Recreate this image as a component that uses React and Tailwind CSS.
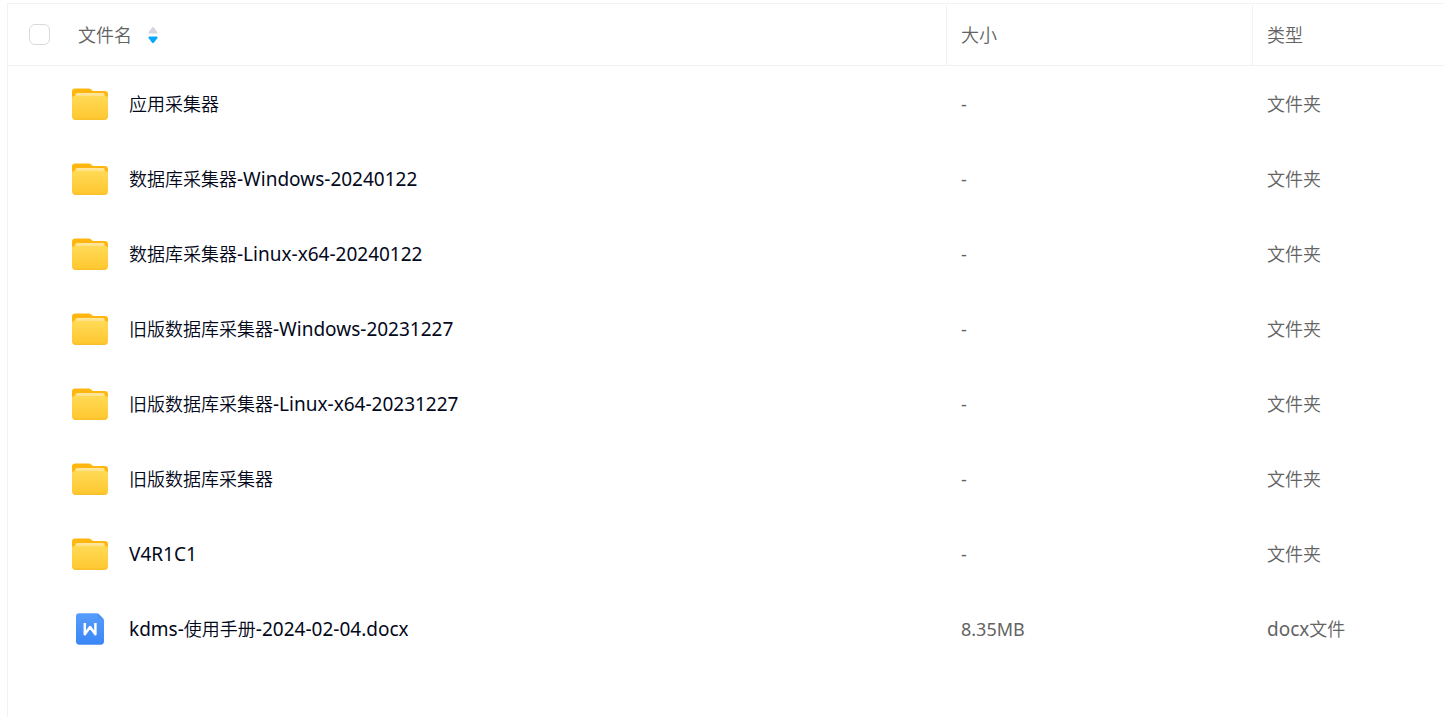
import React from "react";

const files = [
  { name: "应用采集器", size: "-", type: "文件夹" },
  { name: "数据库采集器-Windows-20240122", size: "-", type: "文件夹" },
  { name: "数据库采集器-Linux-x64-20240122", size: "-", type: "文件夹" },
  { name: "旧版数据库采集器-Windows-20231227", size: "-", type: "文件夹" },
  { name: "旧版数据库采集器-Linux-x64-20231227", size: "-", type: "文件夹" },
  { name: "旧版数据库采集器", size: "-", type: "文件夹" },
  { name: "V4R1C1", size: "-", type: "文件夹" },
  { name: "kdms-使用手册-2024-02-04.docx", size: "8.35MB", type: "docx文件" },
];

function FolderIcon() {
  return (
    <svg width="36" height="32" viewBox="0 0 36 32" aria-hidden="true">
      <defs>
        <linearGradient id="folder-front" x1="0" y1="0" x2="0" y2="1">
          <stop offset="0" stopColor="#ffda56" />
          <stop offset="1" stopColor="#ffc72f" />
        </linearGradient>
        <linearGradient id="folder-paper" x1="0" y1="0" x2="0" y2="1">
          <stop offset="0" stopColor="#ffe7a0" />
          <stop offset="1" stopColor="#ffdf78" />
        </linearGradient>
      </defs>
      <path
        d="M0 3.500C0 1.500 1.200.4 3.200.4h13.600c1 0 1.700.3 2.400 1l1.400 1.300c.3.3.7.4 1.200.4h11c2 0 3.200 1.100 3.200 3.100V20H0z"
        fill="#ffb710"
      />
      <path d="M3.300 10V7.300c0-1.500.8-2.300 2.200-2.300h25c1.400 0 2.200.8 2.200 2.300V10z" fill="url(#folder-paper)" />
      <path
        d="M0 10.500c0-1.800 1.200-2.500 3-2.500h30c1.800 0 3 .7 3 2.500V28.500c0 2-1.200 3.200-3.200 3.200H3.200C1.200 31.700 0 30.500 0 28.500z"
        fill="url(#folder-front)"
      />
      <path d="M.6 29.700c.5 1.300 1.300 2 2.600 2h29.600c1.300 0 2.100-.7 2.600-2-.7.700-1.500 1-2.600 1H3.200c-1.100 0-1.900-.3-2.600-1z" fill="#f8b91c" />
    </svg>
  );
}

function DocIcon() {
  return (
    <svg width="28" height="32" viewBox="0 0 28 32" aria-hidden="true">
      <defs>
        <linearGradient id="doc-page" x1="0" y1="0" x2="0" y2="1">
          <stop offset="0" stopColor="#589dfc" />
          <stop offset="1" stopColor="#3a86f6" />
        </linearGradient>
      </defs>
      <path d="M0 3.200C0 1.200 1.200.2 3 .2h17.800c.8 0 1.400.2 2 .8l4.400 4.400c.6.600.8 1.200.8 2V28.600c0 2-1.200 3.200-3.200 3.200H3.200c-2 0-3.200-1.200-3.200-3.200z" fill="url(#doc-page)" />
      <path d="M22 .5 27.700 6.200h-4.200c-1 0-1.500-.5-1.500-1.500z" fill="#4b92f6" />
      <path
        d="M8.800 10v11.300l5.300-7.300 5.300 7.300V10"
        fill="none"
        stroke="#fff"
        strokeWidth="2.500"
        strokeLinejoin="round"
      />
    </svg>
  );
}

function SortIcon() {
  return (
    <svg width="10" height="18" viewBox="0 0 10 18" aria-hidden="true">
      <path d="M4.200 1.500c.5-.6 1.100-.6 1.600 0l3.400 4.200c.6.900.3 1.800-.7 1.800h-7c-1 0-1.300-.9-.7-1.800z" fill="#d3d6de" />
      <path d="M4.200 16.800c.5.600 1.100.6 1.600 0l3.400-4.300c.6-.9.3-2-.7-2h-7c-1 0-1.300 1.100-.7 2z" fill="#06a7ff" />
    </svg>
  );
}

// Latin runs are set one size up so they sit evenly next to the Chinese glyphs
function MixedText({ text }) {
  return text.split(/([\x20-\x7e]+)/).map((part, i) =>
    i % 2 === 1 ? (
      <span key={i} className="text-[19px] font-normal">
        {part}
      </span>
    ) : (
      part
    )
  );
}

function FileRow({ file }) {
  const isFolder = file.type === "文件夹";
  return (
    <tr className="h-[75px]">
      <td className="p-0 pl-16">
        <div className="flex items-center gap-[21px]">
          <span className="flex w-9 justify-center">
            {isFolder ? <FolderIcon /> : <DocIcon />}
          </span>
          <a href="#" className="text-[#03081a]">
            <MixedText text={file.name} />
          </a>
        </div>
      </td>
      <td className="p-0 pl-[15px] font-normal">{file.size}</td>
      <td className="p-0 pl-[15px]">
        <MixedText text={file.type} />
      </td>
    </tr>
  );
}

function App() {
  return (
    <div className="min-h-screen bg-white pt-[3px] pl-[7px] font-['Noto_Sans','Noto_Sans_CJK_SC',sans-serif] text-[18px] leading-6 font-[350] text-[#636363]">
      <div className="min-h-[calc(100vh-3px)] border-t border-l border-[#f1f2f4] pt-px">
        <table className="w-full table-fixed border-separate border-spacing-0 text-left">
          <thead>
            <tr className="h-[61px]">
              <th className="border-b border-[#f1f2f4] p-0 pb-px pl-[21px] font-[350]">
                <div className="flex items-center">
                  <input
                    type="checkbox"
                    aria-label="全选"
                    className="size-[21px] appearance-none rounded-md border border-[#d9d9dc] bg-white"
                  />
                  <button type="button" className="ml-7 flex items-center gap-4">
                    文件名
                    <SortIcon />
                  </button>
                </div>
              </th>
              <th className="w-[306px] border-b border-l border-[#f1f2f4] p-0 pb-px pl-[14px] font-[350]">
                大小
              </th>
              <th className="w-[192px] border-b border-l border-[#f1f2f4] p-0 pb-px pl-[14px] font-[350]">
                类型
              </th>
            </tr>
          </thead>
          <tbody>
            {files.map((file) => (
              <FileRow key={file.name} file={file} />
            ))}
          </tbody>
        </table>
      </div>
    </div>
  );
}

export default App;
